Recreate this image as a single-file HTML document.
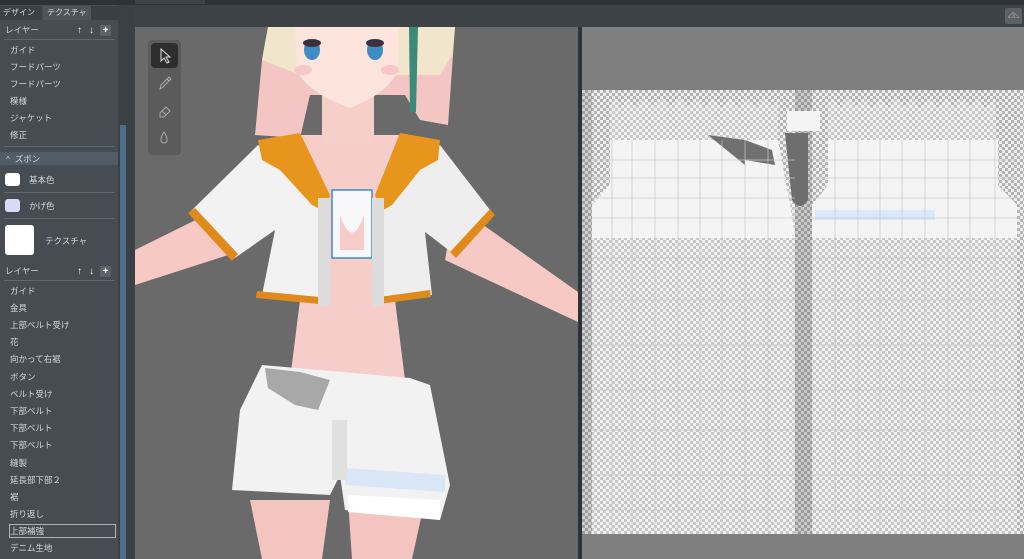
<!DOCTYPE html>
<html><head><meta charset="utf-8"><style>
*{margin:0;padding:0;box-sizing:border-box}
body{width:1024px;height:559px;overflow:hidden;background:#464c52;font-family:"Liberation Sans","Noto Sans CJK JP",sans-serif;position:relative}
.a{position:absolute}
.t{position:absolute;color:#d4d8dc;font-size:8.5px;line-height:12px;white-space:nowrap}
.hl{position:absolute;left:4px;width:111px;height:1px;background:#5f666d}
.btn{position:absolute;width:11px;height:11px;background:#5b6268;color:#fff;font-size:10px;line-height:11px;text-align:center;font-weight:bold}
.chk{background-color:#e8e8e8;background-image:repeating-conic-gradient(#b4b4b4 0 25%,#eeeeee 0 50%);background-size:6px 6px}
</style></head><body>
<div class="a" style="left:0;top:0;width:1024px;height:5px;background:#2e3236"></div>
<div class="a" style="left:135px;top:0;width:70px;height:4px;background:#3d4246"></div>
<!-- left panel -->
<div class="a" style="left:0;top:5px;width:118px;height:554px;background:#464c52"></div>
<div class="a" style="left:0;top:6px;width:42px;height:14px;background:#3c4146"></div>
<div class="a" style="left:43px;top:6px;width:48px;height:14px;background:#4e555b"></div>
<div class="t" style="left:3px;top:7px;font-size:8px">デザイン</div>
<div class="t" style="left:47px;top:7px;font-size:8px">テクスチャ</div>
<div class="a" style="left:91px;top:6px;width:27px;height:14px;background:#3a3f44"></div>
<div class="t" style="left:5px;top:24px">レイヤー</div>
<div class="btn" style="left:74px;top:25px;background:none">↑</div><div class="btn" style="left:86px;top:25px;background:none">↓</div><div class="btn" style="left:100px;top:25px">+</div>
<div class="hl" style="top:39px"></div>
<div class="t" style="left:10px;top:44px">ガイド</div>
<div class="t" style="left:10px;top:61px">フードパーツ</div>
<div class="t" style="left:10px;top:78px">フードパーツ</div>
<div class="t" style="left:10px;top:95px">模様</div>
<div class="t" style="left:10px;top:112px">ジャケット</div>
<div class="t" style="left:10px;top:129px">修正</div>
<div class="hl" style="top:146px"></div>
<div class="a" style="left:0;top:152px;width:118px;height:13px;background:#525c66"></div>
<div class="t" style="left:6px;top:153px">^&nbsp;&nbsp;ズボン</div>
<div class="a" style="left:5px;top:173px;width:15px;height:13px;background:#fff;border-radius:3px"></div>
<div class="t" style="left:29px;top:174px">基本色</div>
<div class="hl" style="top:192px"></div>
<div class="a" style="left:5px;top:199px;width:15px;height:13px;background:#d8dbf4;border-radius:3px"></div>
<div class="t" style="left:29px;top:200px">かげ色</div>
<div class="hl" style="top:218px"></div>
<div class="a" style="left:5px;top:225px;width:29px;height:30px;background:#fff;border-radius:3px"></div>
<div class="t" style="left:45px;top:235px">テクスチャ</div>
<div class="t" style="left:5px;top:265px">レイヤー</div>
<div class="btn" style="left:74px;top:266px;background:none">↑</div><div class="btn" style="left:86px;top:266px;background:none">↓</div><div class="btn" style="left:100px;top:266px">+</div>
<div class="hl" style="top:280px"></div>
<div class="t" style="left:10px;top:285px">ガイド</div>
<div class="t" style="left:10px;top:302px">金具</div>
<div class="t" style="left:10px;top:319px">上部ベルト受け</div>
<div class="t" style="left:10px;top:336px">花</div>
<div class="t" style="left:10px;top:353px">向かって右裾</div>
<div class="t" style="left:10px;top:371px">ボタン</div>
<div class="t" style="left:10px;top:388px">ベルト受け</div>
<div class="t" style="left:10px;top:405px">下部ベルト</div>
<div class="t" style="left:10px;top:422px">下部ベルト</div>
<div class="t" style="left:10px;top:439px">下部ベルト</div>
<div class="t" style="left:10px;top:457px">縫製</div>
<div class="t" style="left:10px;top:474px">延長部下部２</div>
<div class="t" style="left:10px;top:491px">裾</div>
<div class="t" style="left:10px;top:508px">折り返し</div>
<div class="a" style="left:9px;top:524px;width:107px;height:14px;border:1px solid #aeb3b8"></div>
<div class="t" style="left:10px;top:525px">上部補強</div>
<div class="t" style="left:10px;top:542px">デニム生地</div>
<!-- scrollbar -->
<div class="a" style="left:118px;top:5px;width:17px;height:554px;background:#3b4045"></div>
<div class="a" style="left:120px;top:125px;width:6px;height:434px;background:#4b6f86"></div>
<!-- viewport header -->
<div class="a" style="left:135px;top:5px;width:889px;height:22px;background:#3d4246"></div>
<div class="a" style="left:1005px;top:8px;width:17px;height:16px;background:#5d6166;border-radius:2px;color:#aaa;font-size:7px;text-align:center;line-height:16px">⊿◺</div>
<!-- 3D viewport -->
<div class="a" style="left:135px;top:27px;width:443px;height:532px;background:#6a6a6a;overflow:hidden">
<svg width="443" height="532" viewBox="135 27 443 532" style="position:absolute;left:0;top:0">
<path d="M250 500 L330 500 L322 559 L262 559Z" fill="#f3c4c0"/>
<path d="M348 500 L425 500 L412 559 L352 559Z" fill="#f3c4c0"/>
<path d="M240 198 L135 250 L135 285 L250 248Z" fill="#f6c9c4"/>
<path d="M455 205 L578 292 L578 322 L445 260Z" fill="#f6c9c4"/>
<path d="M300 135 L400 135 L410 230 L395 300 L405 380 L290 380 L300 300 L290 230Z" fill="#f6cdc8"/>
<path d="M268 27 L455 27 L448 125 L420 120 L405 95 L310 95 L300 138 L255 135 L262 60Z" fill="#f3c6c4"/>
<path d="M268 27 L455 27 L452 55 L440 75 L300 75 L262 60Z" fill="#f1e6cc"/>
<rect x="322" y="95" width="52" height="50" fill="#f6cfc8"/>
<path d="M295 27 L398 27 L398 70 Q390 92 350 108 Q306 92 297 70Z" fill="#fde4dc"/>
<ellipse cx="312" cy="50" rx="8" ry="10" fill="#3d8dc4"/>
<ellipse cx="375" cy="50" rx="8" ry="10" fill="#3d8dc4"/>
<ellipse cx="312" cy="43" rx="9" ry="4" fill="#3a3040"/>
<ellipse cx="375" cy="43" rx="9" ry="4" fill="#3a3040"/>
<ellipse cx="303" cy="70" rx="9" ry="5" fill="#f8c8c8"/>
<ellipse cx="390" cy="70" rx="9" ry="5" fill="#f8c8c8"/>
<path d="M409 27 L418 27 L416 112 L410 112Z" fill="#3e8a78"/>
<path d="M258 145 L190 212 L232 260 L275 230 L262 295 L330 302 L330 200 Z" fill="#f2f2f2"/>
<path d="M440 145 L490 210 L455 255 L425 232 L432 295 L372 302 L372 200 Z" fill="#eeeeee"/>
<path d="M188 213 L195 208 L238 254 L232 261Z" fill="#e08a1c"/>
<path d="M490 209 L495 215 L456 258 L450 252Z" fill="#e08a1c"/>
<path d="M257 291 L330 298 L330 305 L256 298Z" fill="#e08a1c"/>
<path d="M372 298 L430 290 L431 297 L372 305Z" fill="#e08a1c"/>
<path d="M258 140 L300 133 L330 195 L326 212 L312 205 L280 170 L262 160Z" fill="#e8951e"/>
<path d="M440 140 L400 133 L375 195 L380 212 L392 205 L420 170 L438 160Z" fill="#e8951e"/>
<path d="M332 190 L372 190 L372 258 L332 258Z" fill="#f8f8fa" stroke="#3f86d6" stroke-width="1.5"/>
<path d="M340 215 Q352 250 364 215 L364 250 L340 250Z" fill="#f6cdc8"/>
<rect x="318" y="198" width="12" height="108" fill="#dcdcdc"/>
<rect x="372" y="198" width="12" height="108" fill="#dcdcdc"/>
<path d="M262 365 L410 378 L430 385 L450 485 L440 520 L345 510 L340 475 L330 495 L232 490 L240 410Z" fill="#f2f2f2"/>
<path d="M265 368 L300 372 L330 380 L318 410 L295 405 L268 388Z" fill="#a8a8a8"/>
<path d="M345 468 L445 475 L445 492 L345 485Z" fill="#d8e6f6"/>
<path d="M348 495 L440 500 L440 520 L348 512Z" fill="#ffffff"/>
<rect x="332" y="420" width="15" height="60" fill="#e0e0e0"/>
</svg>
<div class="a" style="left:13px;top:13px;width:33px;height:115px;background:#5b5b5b;border-radius:4px"></div>
<div class="a" style="left:16px;top:16px;width:27px;height:25px;background:#2e2e2e;border-radius:4px"></div>
<svg class="a" style="left:13px;top:13px" width="33" height="115" viewBox="0 0 33 115" fill="none" stroke="#ddd" stroke-width="1">
<path d="M13 9 L13 21 L16 18 L19 23 L21 22 L18 17 L22 17 Z"/>
<path d="M12 49 L13 45 L21 37 L23 39 L15 47 Z M19 39 L21 41" stroke="#aaa"/>
<path d="M12 73 L18 67 L22 71 L16 77 L12 77 Z M14 71 L18 75" stroke="#aaa"/>
<path d="M16 92 C12 98 12 103 16 103 C20 103 20 98 16 92 Z" stroke="#aaa"/>
</svg>
</div>
<div class="a" style="left:578px;top:27px;width:4px;height:532px;background:#2e3135"></div>
<!-- texture view -->
<div class="a" style="left:582px;top:27px;width:442px;height:532px;background:#7f7f7f"></div>
<div class="a chk" style="left:582px;top:90px;width:442px;height:444px"></div>
<svg class="a" style="left:582px;top:90px" width="442" height="444" viewBox="582 90 442 444">
<rect x="582" y="90" width="10" height="444" fill="#000" opacity="0.12"/>
<rect x="795" y="90" width="17" height="444" fill="#000" opacity="0.15"/>
<path d="M610 105 L615 98 L620 108 L628 98 L635 108 L645 98 L652 108 L662 98 L670 108 L680 98 L688 108 L697 98 L705 108 L713 98 L722 108 L730 98 L738 108 L747 98 L756 108 L764 98 L772 108 L778 98 L778 165 L795 205 L795 534 L592 534 L592 205 L610 185Z" fill="#ffffff" opacity="0.25"/>
<path d="M828 105 L833 98 L840 108 L848 98 L856 108 L864 98 L872 108 L880 98 L888 108 L896 98 L904 108 L912 98 L920 108 L930 98 L938 108 L946 98 L954 108 L962 98 L970 108 L978 98 L985 108 L995 98 L998 185 L1017 205 L1017 534 L812 534 L812 205 L828 185Z" fill="#ffffff" opacity="0.25"/>
<path d="M610 140 L778 140 L790 205 L795 238 L592 238 L592 205 L610 185Z" fill="#f4f4f4"/>
<path d="M828 140 L998 140 L998 185 L1017 205 L1017 238 L812 238 L812 205 L828 185Z" fill="#f4f4f4"/>
<path d="M785 133 L808 133 L808 200 Q800 212 792 200Z" fill="#6e6e6e"/>
<rect x="787" y="111" width="33" height="20" fill="#f4f4f4"/>
<path d="M708 135 L745 140 L772 150 L775 165 L745 160 L745 165Z" fill="#707070"/>
<rect x="815" y="210" width="120" height="10" fill="#d9e8fb"/>
<g stroke="#c8c8c8" stroke-width="0.7">
<path d="M612 140 V534 M632 140 V534 M655 140 V534 M678 140 V534 M700 140 V534 M722 140 V534 M745 140 V534 M768 140 V534"/>
<path d="M835 140 V534 M858 140 V534 M880 140 V534 M902 140 V534 M925 140 V534 M948 140 V534 M970 140 V534 M995 140 V534"/>
<path d="M592 160 H795 M812 160 H1017 M592 178 H795 M812 178 H1017 M592 198 H795 M812 198 H1017 M592 218 H795 M812 218 H1017 M592 258 H795 M812 258 H1017 M592 300 H795 M812 300 H1017 M592 345 H795 M812 345 H1017 M592 390 H795 M812 390 H1017 M592 430 H795 M812 430 H1017 M592 475 H795 M812 475 H1017 M592 510 H795 M812 510 H1017"/>
</g>
</svg>
</body></html>
